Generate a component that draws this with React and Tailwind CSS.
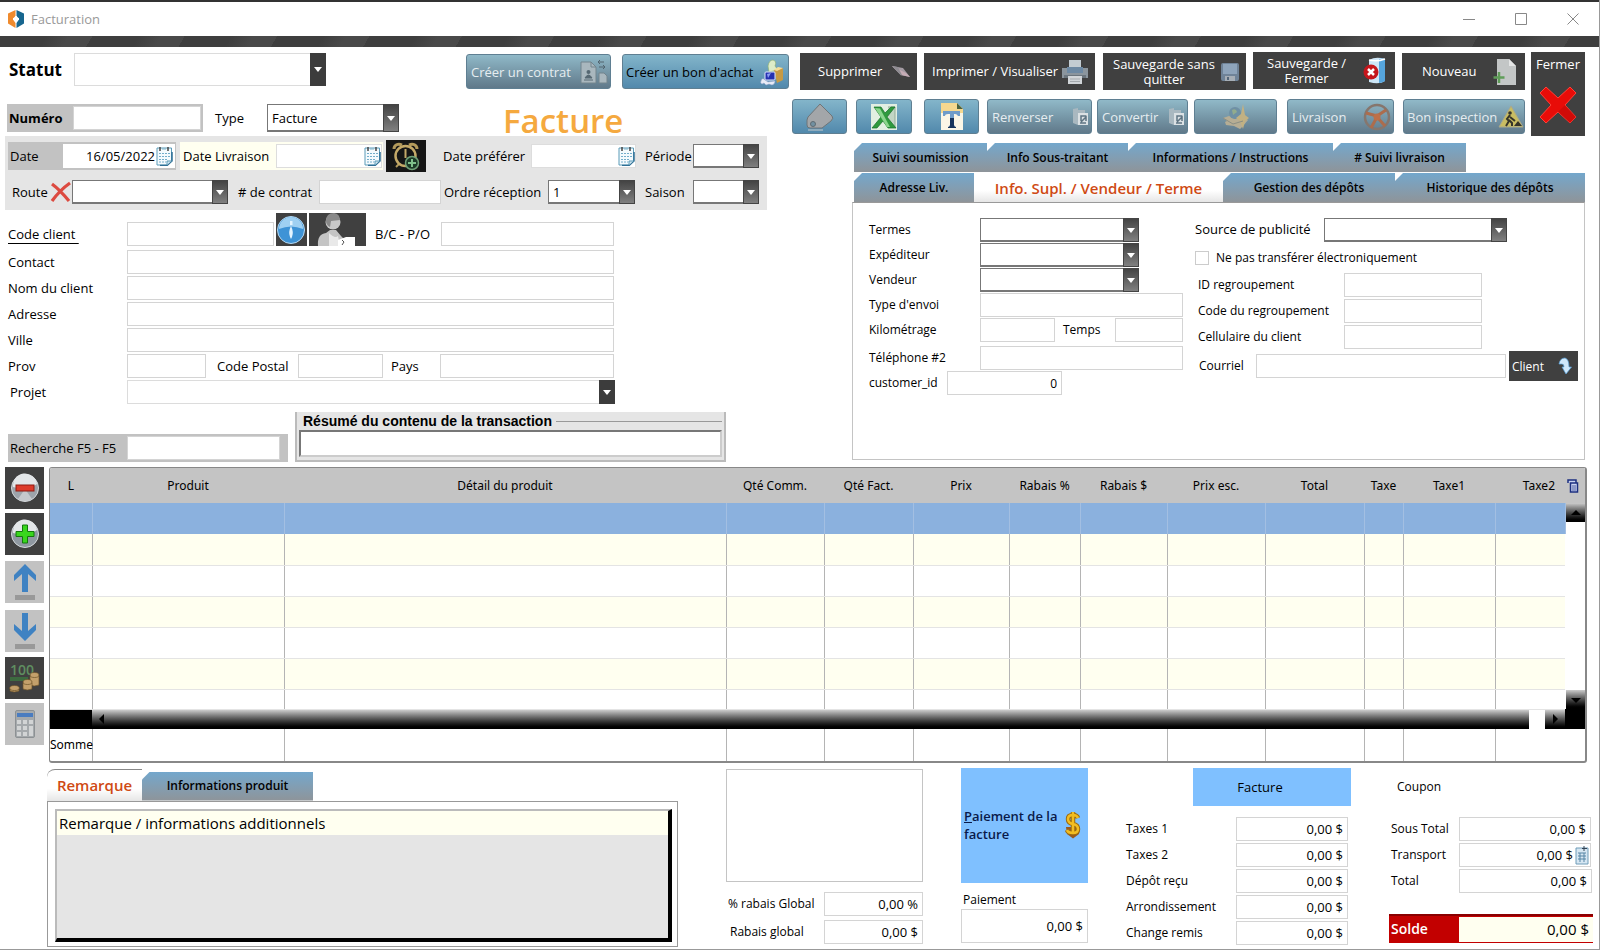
import { useId } from 'react'

const box = 'border border-[#d4d4d4] bg-white px-1 outline-none min-w-0'

function Input({ className = '', label, value = '', id }) {
    return (
        <input
            type="text"
            id={id}
            aria-label={label}
            defaultValue={value}
            className={`${box} h-6 ${className}`}
        />
    )
}

// label and text box side by side, tied together
function Field({ label, labelClass = '', inputClass = '', value }) {
    const id = useId()
    return (
        <>
            <label htmlFor={id} className={`shrink-0 whitespace-nowrap ${labelClass}`}>{label}</label>
            <Input id={id} value={value} className={inputClass} />
        </>
    )
}

function Select({ className = '', label, id, options = [''], flat = false }) {
    return (
        <div className={`relative shrink-0 ${className}`}>
            <select
                id={id}
                aria-label={label}
                className={`w-full h-full appearance-none bg-white pl-1 pr-5 outline-none border ${flat ? 'border-[#dcdcdc]' : 'border-[#777] border-b-2'}`}
            >
                {options.map((o) => <option key={o}>{o}</option>)}
            </select>
            <span
                className={`pointer-events-none absolute right-0 inset-y-0 w-4 flex items-center justify-center ${flat ? 'bg-[#3c3c3c]' : 'bg-linear-to-b from-[#444] to-[#808080] border border-[#444]'}`}
            >
                <svg viewBox="0 0 8 5" className="w-2 h-[5px]"><path d="M0 0h8L4 5z" fill="#fff" /></svg>
            </span>
        </div>
    )
}

function SelectField({ label, labelClass = '', selectClass = '', options, flat }) {
    const id = useId()
    return (
        <>
            <label htmlFor={id} className={`shrink-0 whitespace-nowrap ${labelClass}`}>{label}</label>
            <Select id={id} options={options} flat={flat} className={selectClass} />
        </>
    )
}

function DarkButton({ children, className = '' }) {
    return (
        <button type="button" className={`bg-[#404040] text-white flex items-center justify-between shrink-0 text-center leading-[15px] ${className}`}>
            {children}
        </button>
    )
}

function BlueButton({ children, className = '', muted = false, label }) {
    return (
        <button
            type="button"
            aria-label={label}
            className={`h-[35px] shrink-0 flex items-center rounded-[3px] border border-[#5f7f92] whitespace-nowrap font-medium ${muted ? 'text-[#e6edf0] bg-linear-to-b from-[#90b9c8] to-[#60798a]' : 'text-black bg-linear-to-b from-[#83b5ca] to-[#5289ac]'} ${className}`}
        >
            {children}
        </button>
    )
}

/* ---------- icons ---------- */

function CalendarIcon() {
    return (
        <svg viewBox="0 0 18 20" className="w-[18px] h-5 shrink-0">
            <path d="M2 2h14.500v12.500L12 19H2z" fill="#f4fafd" stroke="#5b9bb8" />
            <path d="M17 6v9l-5 4.500H5" fill="none" stroke="#2f6f95" strokeWidth="1.500" />
            <path d="M12 19v-4h4.500" fill="#cfe4ee" stroke="#5b9bb8" />
            <path d="M5 1v4M13 1v4" stroke="#444" strokeWidth="1.500" />
            <path d="M7 3h4" stroke="#7fb3ca" />
            <path d="M4 7.500h11M4 10.500h11M4 13.500h8M4 16h7" stroke="#74aecb" strokeDasharray="2 1" />
        </svg>
    )
}

function LogoIcon() {
    return (
        <svg viewBox="0 0 18 18" className="w-[18px] h-[18px]">
            <path d="M8.500 0 1 3.500v10L8.500 18v-5L6 9.500v-1L8.500 6z" fill="#ef8a2d" />
            <path d="m9.500 0 7.500 3.500v10L9.500 18v-5L12 9.500v-1L9.500 6z" fill="#17668f" />
            <path d="M9 6v6M6 9h6" stroke="#fff" strokeWidth="2" />
        </svg>
    )
}

function ClockIcon() {
    return (
        <svg viewBox="0 0 40 32" className="w-10 h-8">
            <path d="M8 9c0-4 4-6 8-4M31 9c0-4-4-6-8-4" fill="none" stroke="#b39a5c" strokeWidth="3" />
            <path d="M10 27l3-3" stroke="#b39a5c" strokeWidth="2" />
            <circle cx="19.500" cy="16" r="10" fill="none" stroke="#c4a968" strokeWidth="2.500" />
            <path d="M19.500 9v9" stroke="#c4a968" strokeWidth="2" />
            <circle cx="26" cy="23" r="6.500" fill="#1c3a28" stroke="#6fa077" strokeWidth="1.500" />
            <path d="M26 19v8M22 23h8" stroke="#7fc08b" strokeWidth="2" />
        </svg>
    )
}

function CrossIcon() {
    return (
        <svg viewBox="0 0 22 22" className="w-[22px] h-[22px] shrink-0">
            <path d="M2 3q8 6 17 17M20 2Q10 9 2 20" fill="none" stroke="#dc4a40" strokeWidth="3.200" />
        </svg>
    )
}

function ContractIcon() {
    return (
        <svg viewBox="0 0 28 26" className="w-7 h-[26px]">
            <path d="M1 3h10l5 5v16H1z" fill="#a9b7be" stroke="#73848d" />
            <path d="M11 3v5h5" fill="none" stroke="#73848d" />
            <circle cx="8.500" cy="13" r="2" fill="#566872" />
            <path d="M5 19q3.500-6 7 0zM4 21h9" fill="#566872" stroke="#566872" />
            <path d="M19 14h5l3 3v7h-8z" fill="#a9b7be" stroke="#73848d" />
            <path d="M24 3h-6l2-2m-2 2 2 2M19 8h6l-2-2m2 2-2 2" fill="none" stroke="#52646e" />
        </svg>
    )
}

function PurchaseIcon() {
    return (
        <svg viewBox="0 0 24 28" className="w-6 h-7">
            <path d="M8 8q1-6 5-6 4 1 2 6l3 4-9 2z" fill="#dcebc8" stroke="#8fae6a" strokeWidth=".6" />
            <path d="m14 12 9-2v12l-6 3z" fill="#c79a44" />
            <path d="m14 12 3 1 6-3-5-1z" fill="#f3dc98" />
            <rect x="5" y="14" width="10" height="8" rx="1" fill="#2430b0" stroke="#dfe4ff" />
            <path d="m7 16 4-1-3 5z" fill="#8d9cf2" />
            <path d="M1 23q1-4 4-1l3 2 7-1q0 3-3 4l-3-1-3 1-2-2-2 1q-2-1-1-3" fill="#e9ecf6" stroke="#98a6cf" strokeWidth=".5" />
        </svg>
    )
}

function EraserIcon() {
    return (
        <svg viewBox="0 0 20 14" className="w-5 h-3.5">
            <path d="m1 1 11 2 7 9-9-2z" fill="#a49ba3" />
            <path d="m1 1 9 9 9 2-4-4z" fill="#c6acb5" />
            <path d="m1 1 6 1 4 8-1 .500z" fill="#8f8c92" />
        </svg>
    )
}

function PrinterIcon() {
    return (
        <svg viewBox="0 0 28 26" className="w-7 h-[26px]">
            <path d="M8 1h12v9H8z" fill="#c3ccd2" />
            <path d="M1 9h5v4h16V9h5v10H1z" fill="#8b959d" />
            <path d="M6 8h16v6H6z" fill="#6d89a3" />
            <path d="M3 19h22v-3H3z" fill="#6b757d" />
            <path d="M7 17h14v8H7z" fill="#d1d5d8" />
            <path d="M9 20h10M9 22.500h10" stroke="#a4a9ad" />
        </svg>
    )
}

function DiskIcon() {
    return (
        <svg viewBox="0 0 20 20" className="w-5 h-5">
            <rect x="1" y="1" width="18" height="18" rx="2" fill="#6f8398" />
            <path d="M3 2h14v10H3z" fill="#8ea4bb" />
            <path d="M5 14h10v5H5z" fill="#a6aeb6" />
            <path d="M7 15h2v3H7z" fill="#55677a" />
        </svg>
    )
}

function DoorIcon() {
    return (
        <svg viewBox="0 0 24 30" className="w-6 h-[30px]">
            <path d="M6 4q7-4 16-1v22q-6 4-16 1z" fill="#cde6f7" />
            <path d="M16 3q4-1 6 0v22q-3 2-6 2z" fill="#56a5dc" />
            <path d="M6 4q8 2 16-1" fill="none" stroke="#fff" strokeWidth="1.500" />
            <circle cx="8" cy="16" r="7.500" fill="#c5161c" />
            <path d="m5 13 6 6m0-6-6 6" stroke="#fff" strokeWidth="2.500" />
        </svg>
    )
}

function NewDocIcon() {
    return (
        <svg viewBox="0 0 24 28" className="w-6 h-7">
            <path d="M4 1h12l7 7v19H4z" fill="#c3c6c6" />
            <path d="M16 1v7h7z" fill="#e4e5e5" />
            <path d="M6 14v11M.5 19.500h11" stroke="#5f9d58" strokeWidth="2.500" />
        </svg>
    )
}

function RedXIcon() {
    return (
        <svg viewBox="0 0 38 38" className="w-[38px] h-[38px]">
            <path d="m7 1 12 11L31 1l6 6-11 12 11 12-6 6-12-11L7 37l-6-6 11-12L1 7z" fill="#e80c08" stroke="#ff4038" strokeLinejoin="round" />
            <path d="m19 26 12 11 6-6-11-12z" fill="#b80a08" opacity=".5" />
        </svg>
    )
}

function TagIcon() {
    return (
        <svg viewBox="0 0 28 28" className="w-7 h-7">
            <path d="M2 14 14 1l12 12q2 2-1 5l-9 7H4q-3 0-3-3v-5z" fill="#a3a6a9" stroke="#6f7578" />
            <circle cx="7" cy="21" r="2.500" fill="#7191a2" stroke="#5f6b72" />
            <path d="M2 27h15" stroke="#c5cacc" />
        </svg>
    )
}

function ExcelIcon() {
    return (
        <svg viewBox="0 0 26 26" className="w-[26px] h-[26px]">
            <path d="M0 0h26v26H0z" fill="#e2efe2" />
            <path d="M17 3h7v20h-7" fill="#c3d6c5" stroke="#94ab97" />
            <path d="M3 3h7l4 6 6-6h4l-8 10 9 11h-8l-5-7-6 7H1l9-11z" fill="#2f9a3e" stroke="#17702a" strokeWidth=".7" />
            <path d="m4 4 5 .500L19 23h-3z" fill="#8bd68e" />
        </svg>
    )
}

function TextDocIcon() {
    return (
        <svg viewBox="0 0 22 27" className="w-[22px] h-[27px]">
            <path d="M0 0h16l6 6v21H0z" fill="#fbf6e6" />
            <path d="M0 0h16l6 6v4H0z" fill="#f5d88f" />
            <path d="M16 0v6h6z" fill="#4a6240" />
            <path d="M2 8h17v5h-2q-1-2-3-2h-1v11q0 2 2 2v1H7v-1q2 0 2-2V11H7q-3 0-3 2H2z" fill="#6f9cc9" />
            <path d="M9 15h4v7q0 2 2 2v1H7v-1q2 0 2-2z" fill="#17345c" />
        </svg>
    )
}

function ConvertIcon() {
    return (
        <svg viewBox="0 0 17 20" className="w-[17px] h-5">
            <path d="M1 2 6 1v17l-5-2zM6 3h7v15H6z" fill="#a9b8c0" />
            <path d="M6 6h10v12H6z" fill="#dbe1e4" />
            <path d="M9 14V9h5m-5 6 5-5v4M8 16h6" fill="none" stroke="#5f7482" strokeWidth="1.500" />
        </svg>
    )
}

function MapIcon() {
    return (
        <svg viewBox="0 0 28 26" className="w-7 h-[26px]">
            <path d="m1 14 6-2 6 3 7-4 6 5-5 6-3 3-6-3-8-1-1-3 2-1z" fill="#b6ad94" />
            <circle cx="13" cy="9" r="6" fill="#6f90a4" />
            <path d="M10 6q4-2 5 2l-4 3z" fill="#92ac8d" />
            <path d="m21 0 2 11 4 3-4 3-2 8-3-8-4-3 5-4z" fill="#c2b182" />
            <path d="m1 14 10 6 10-3" fill="none" stroke="#8b8f85" />
        </svg>
    )
}

function WheelIcon() {
    return (
        <svg viewBox="0 0 28 28" className="w-7 h-7">
            <circle cx="14" cy="14" r="12" fill="none" stroke="#86766d" strokeWidth="2.500" />
            <path d="m14 13-11-3m11 3 9-6M14 14 8 25m6-11 8 9" stroke="#ad6c4c" strokeWidth="3" />
            <circle cx="14" cy="14" r="3.500" fill="#bd7049" />
        </svg>
    )
}

function WorksIcon() {
    return (
        <svg viewBox="0 0 26 24" className="w-[26px] h-6">
            <path d="m13 1 12 21H1z" fill="#c9bd62" stroke="#a9a98c" />
            <circle cx="12" cy="8" r="1.800" fill="#35342a" />
            <path d="m12 10-3 4 2 2-3 5m3-6 3 3v3m-2-9 5 4" fill="none" stroke="#35342a" strokeWidth="2" />
            <path d="m16 21 4-5 4 5z" fill="#35342a" />
        </svg>
    )
}

function InfoIcon() {
    return (
        <svg viewBox="0 0 30 32" className="w-[30px] h-8">
            <circle cx="15" cy="16" r="13.500" fill="#3e93d6" stroke="#b6d9f2" />
            <path d="M3 15a12 12 0 0 1 24 0q-12-5-24 0" fill="#9fd0f2" />
            <path d="M15 12q3 6 1 11l-1 2-1-2q-2-5 1-11M14 7h2.500v4H14z" fill="#e4f4ff" />
        </svg>
    )
}

function PersonIcon() {
    return (
        <svg viewBox="0 0 57 33" className="w-[57px] h-[33px]">
            <path d="M9 33q-1-12 8-13l4-3h6l5 6 3 3v7z" fill="#c4c4c4" />
            <circle cx="24" cy="9" r="7.500" fill="#c9c9c9" />
            <path d="M17 8q0-8 8-8 6 1 6 7l-9 1-1 6q-4-2-4-6" fill="#898989" />
            <path d="M20 20q6 6 9 3l2 10H20z" fill="#e9e9e9" />
            <path d="M29 27l8-3h9v9H29z" fill="#fff" />
            <path d="M33 27l2 2-2 3" fill="none" stroke="#555" />
        </svg>
    )
}

function MinusBall() {
    return (
        <svg viewBox="0 0 30 30" className="w-[30px] h-[30px]">
            <circle cx="15" cy="15" r="13.500" fill="#9da4ab" stroke="#d5d9dc" />
            <path d="M3 14a12 12 0 0 1 24-3q-10 7-24 3" fill="#e3e6e8" />
            <path d="M15 16 8 26q7 4 14 0z" fill="#dfe2e4" opacity=".6" />
            <rect x="6" y="12" width="18" height="6" fill="#dd3b2b" stroke="#8e1a12" />
        </svg>
    )
}

function PlusBall() {
    return (
        <svg viewBox="0 0 30 30" className="w-[30px] h-[30px]">
            <circle cx="15" cy="15" r="13.500" fill="#8f98a1" stroke="#d5d9dc" />
            <path d="M3 14a12 12 0 0 1 24-3q-10 7-24 3" fill="#e3e6e8" />
            <path d="M12.500 6h5v6.500H24v5h-6.500V24h-5v-6.500H6v-5h6.500z" fill="#39d61d" stroke="#13780c" />
        </svg>
    )
}

function ArrowUpIcon() {
    return (
        <svg viewBox="0 0 24 38" className="w-6 h-[38px]">
            <path d="M12 1 23 12v6l-8-7v18H9V11l-8 7v-6z" fill="#3f82c2" />
            <path d="M2 32h20v5H2z" fill="#999" />
        </svg>
    )
}

function ArrowDownIcon() {
    return (
        <svg viewBox="0 0 24 38" className="w-6 h-[38px]">
            <path d="M12 29 23 18v-6l-8 7V1H9v18l-8-7v6z" fill="#3f82c2" />
            <path d="M2 32h20v5H2z" fill="#999" />
        </svg>
    )
}

function CoinsIcon() {
    return (
        <svg viewBox="0 0 32 36" className="w-8 h-9">
            <text x="1" y="15" fontSize="14" fontFamily="Open Sans, sans-serif" fontWeight="600" fill="#5f8f60">100</text>
            <path d="M1 17h18v4H1z" fill="#3d6a40" />
            <g fill="#c3a06b" stroke="#6b5128" strokeWidth=".7">
                <path d="M21 16v9q4 2 9 0v-9z" />
                <ellipse cx="25.500" cy="15" rx="4.500" ry="2.500" />
                <path d="M14 23v6q4 2 9 0v-6z" />
                <ellipse cx="18.500" cy="22" rx="4.500" ry="2.500" />
                <path d="M1 28v3q4 2 9 0v-3z" />
                <ellipse cx="5.500" cy="28" rx="4.800" ry="2.500" />
            </g>
        </svg>
    )
}

function CalcIcon() {
    return (
        <svg viewBox="0 0 20 28" className="w-5 h-7">
            <rect x=".5" y=".5" width="19" height="27" rx="1.500" fill="#a5a9ac" stroke="#8d9194" />
            <path d="M2 3h16v4H2z" fill="#4a7cc0" />
            <path d="M2 10h4v4H2zM8 10h4v4H8zM14 10h4v4h-4zM2 16h4v4H2zM8 16h4v4H8zM14 16h4v10h-4zM2 22h4v4H2zM8 22h4v4H8z" fill="#d2d4d5" />
        </svg>
    )
}

function DollarIcon() {
    return (
        <svg viewBox="0 0 18 28" className="w-[18px] h-7">
            <path d="M2 16h14l-1 7-6 4.500L3 23z" fill="#9a5a1c" />
            <path d="M14 7q-1-3-5-3-5 0-5 4t5 5 5 5-5 4-6-3M9 1v22" fill="none" stroke="#9b6b12" strokeWidth="4.500" />
            <path d="M14 7q-1-3-5-3-5 0-5 4t5 5 5 5-5 4-6-3M9 1v22" fill="none" stroke="#f2bd22" strokeWidth="2.500" />
        </svg>
    )
}

function CopyIcon() {
    return (
        <svg viewBox="0 0 12 14" className="w-3 h-3.5">
            <path d="M1 4V1h8v3M3.500 4h7v9h-7z" fill="#c8d2f0" stroke="#1c2f80" strokeWidth="1.500" />
            <path d="M5 7h4M5 9h4M5 11h4" stroke="#1c2f80" strokeWidth=".7" />
        </svg>
    )
}

function HookArrowIcon() {
    return (
        <svg viewBox="0 0 14 18" className="w-3.5 h-[18px]">
            <path d="M1 7q1-6 6-6 4 1 4 9h2.500L8 17 4 10h2q0-3-2-3z" fill="#cfe8fb" stroke="#5aa3dc" strokeWidth=".7" />
        </svg>
    )
}

/* ---------- tabs ---------- */

function Tab({ children, className = '' }) {
    return (
        <button
            type="button"
            role="tab"
            aria-selected="false"
            className={`h-[29px] whitespace-nowrap text-black bg-linear-to-b from-[#73a7cc] to-[#8e9499] [clip-path:polygon(8px_0,100%_0,100%_100%,0_100%,0_8px)] ${className}`}
        >
            {children}
        </button>
    )
}

function ActiveTab({ children, className = '' }) {
    return (
        <button
            type="button"
            role="tab"
            aria-selected="true"
            className={`whitespace-nowrap text-[#cf4a14] text-[15px] bg-linear-to-b from-white from-60% to-[#e6e6e6] ${className}`}
        >
            {children}
        </button>
    )
}

/* ---------- sections ---------- */

function TitleBar() {
    return (
        <>
            <header className="h-9 border-t-2 border-[#333] flex items-center pl-[7px] pr-[18px] text-[#999]">
                <LogoIcon />
                <h1 className="ml-1.5 text-[13px]">Facturation</h1>
                <div className="ml-auto flex items-center gap-9">
                    <button type="button" aria-label="Réduire" className="w-4 h-4">
                        <svg viewBox="0 0 16 16"><path d="M2 8.500h12" stroke="#888" /></svg>
                    </button>
                    <button type="button" aria-label="Agrandir" className="w-4 h-4">
                        <svg viewBox="0 0 16 16"><path d="M2.500 2.500h11v11h-11z" fill="none" stroke="#888" /></svg>
                    </button>
                    <button type="button" aria-label="Fermer la fenêtre" className="w-4 h-4">
                        <svg viewBox="0 0 16 16"><path d="m2.500 2.500 11 11m0-11-11 11" stroke="#888" /></svg>
                    </button>
                </div>
            </header>
            <div className="h-[11px] bg-[repeating-linear-gradient(120deg,#3e3e3e_0px,#3e3e3e_40px,#494949_60px,#494949_80px)]" />
        </>
    )
}

function LeftHeader() {
    return (
        <>
            <div className="flex items-start pl-[9px] pt-[6px]">
                <SelectField
                    label="Statut"
                    labelClass="w-[65px] leading-[33px] text-[17px] font-bold"
                    selectClass="w-[252px] h-[33px]"
                    flat
                />
                <BlueButton muted className="ml-[140px] mt-px w-[145px] justify-between pl-1 pr-0.5">
                    Créer un contrat
                    <ContractIcon />
                </BlueButton>
                <BlueButton className="ml-[11px] mt-px w-[167px] justify-between pl-[3px] pr-1">
                    Créer un bon d'achat
                    <PurchaseIcon />
                </BlueButton>
            </div>
            <div className="flex items-center pl-[7px] mt-3 h-[34px]">
                <div className="bg-[#c2c2c2] w-[196px] h-7 flex items-center pl-0.5">
                    <Field label="Numéro" labelClass="w-16 font-bold" inputClass="w-[128px]" />
                </div>
                <SelectField
                    label="Type"
                    labelClass="ml-3 w-[52px]"
                    selectClass="w-[132px] h-7"
                    options={['Facture']}
                />
                <h2 className="ml-[104px] pt-1.5 text-[33px] leading-[34px] font-semibold text-[#f5a93f]">Facture</h2>
            </div>
        </>
    )
}

function DatesPanel() {
    return (
        <section className="ml-[5px] mt-px w-[762px] h-[74px] bg-[#e5e5e5] pl-[3px] flex flex-col justify-center gap-1.5">
            <div className="flex items-center h-8">
                <div className="bg-[#c2c2c2] w-[168px] h-7 flex items-center pl-0.5">
                    <label htmlFor="date" className="w-[53px] font-medium">Date</label>
                    <div className="bg-white w-[112px] h-6 flex items-center">
                        <input id="date" type="text" defaultValue="16/05/2022" className="w-[92px] text-right outline-none" />
                        <CalendarIcon />
                    </div>
                </div>
                <div className="ml-1 bg-[#fffff0] w-[203px] h-7 flex items-center pl-[3px]">
                    <label htmlFor="livraison" className="w-[93px] font-medium whitespace-nowrap">Date Livraison</label>
                    <div className="bg-white border border-[#ddd] w-[106px] h-6 flex items-center">
                        <input id="livraison" type="text" className="w-[86px] outline-none" />
                        <CalendarIcon />
                    </div>
                </div>
                <button type="button" aria-label="Rappel" className="ml-[3px] bg-[#161616] w-10 h-8">
                    <ClockIcon />
                </button>
                <label htmlFor="preferer" className="ml-[17px] w-[88px] whitespace-nowrap">Date préférer</label>
                <div className="bg-white border border-[#ddd] w-[105px] h-6 flex items-center">
                    <input id="preferer" type="text" className="w-[85px] outline-none" />
                    <CalendarIcon />
                </div>
                <SelectField label="Période" labelClass="ml-[9px] w-12" selectClass="w-[66px] h-6" />
            </div>
            <div className="flex items-center h-7 pl-1">
                <label htmlFor="route" className="w-[38px]">Route</label>
                <CrossIcon />
                <Select id="route" className="w-[156px] h-6" />
                <Field label="# de contrat" labelClass="ml-2.5 w-[81px]" inputClass="w-[122px]" />
                <SelectField
                    label="Ordre réception"
                    labelClass="ml-[3px] w-[104px]"
                    selectClass="w-[87px] h-6"
                    options={['1']}
                />
                <SelectField label="Saison" labelClass="ml-2.5 w-12" selectClass="w-[66px] h-6" />
            </div>
        </section>
    )
}

function ClientForm() {
    return (
        <section className="pl-2 mt-[3px] w-[616px] flex flex-col">
            <div className="flex items-end h-[33px]">
                <label htmlFor="code" className="w-[119px] h-6 leading-6 underline underline-offset-4">Code client&nbsp;</label>
                <Input id="code" className="w-[147px]" />
                <button type="button" aria-label="Information" className="ml-0.5 bg-[#404040] w-[31px] h-[33px]"><InfoIcon /></button>
                <button type="button" aria-label="Fiche client" className="ml-0.5 bg-[#404040] w-[57px] h-[33px]"><PersonIcon /></button>
                <Field label="B/C - P/O" labelClass="ml-[9px] w-[66px] leading-6" inputClass="w-[173px]" />
            </div>
            <div className="flex flex-col gap-0.5 pt-1">
                {['Contact', 'Nom du client', 'Adresse', 'Ville'].map((label) => (
                    <div key={label} className="flex items-center">
                        <Field label={label} labelClass="w-[119px]" inputClass="w-[487px]" />
                    </div>
                ))}
                <div className="flex items-center">
                    <Field label="Prov" labelClass="w-[119px]" inputClass="w-[79px]" />
                    <Field label="Code Postal" labelClass="ml-[11px] w-[81px]" inputClass="w-[85px]" />
                    <Field label="Pays" labelClass="ml-2 w-[49px]" inputClass="w-[174px]" />
                </div>
                <div className="flex items-center">
                    <SelectField label="Projet" labelClass="pl-0.5 w-[119px]" selectClass="w-[488px] h-6" flat />
                </div>
            </div>
        </section>
    )
}

function SearchRow() {
    return (
        <div className="flex items-end pl-2 mt-2">
            <div className="bg-[#c2c2c2] w-[280px] h-7 flex items-center pl-0.5">
                <Field label="Recherche F5 - F5" labelClass="w-[117px]" inputClass="w-[153px]" />
            </div>
            <div className="ml-[7px] w-[431px] h-[50px] bg-[#e5e5e5] border-2 border-t-0 border-[#bbb] px-0.5">
                <div className="flex items-center gap-1">
                    <label htmlFor="resume" className="font-['Liberation_Sans',sans-serif] font-bold text-sm leading-[18px] pl-1">
                        Résumé du contenu de la transaction
                    </label>
                    <span className="grow h-px bg-[#999]" />
                </div>
                <input id="resume" type="text" className="w-full h-[27px] bg-white border-2 border-[#ccc] border-t-[#777] border-l-[#777] px-1 outline-none" />
            </div>
        </div>
    )
}

function Toolbar() {
    return (
        <div className="flex justify-between pt-[5px] pr-3.5">
            <div className="flex flex-col gap-[9px]">
                <div className="flex pl-2 gap-[7px] font-medium">
                    <DarkButton className="w-[117px] h-[37px] pl-[18px] pr-1.5 mt-px">Supprimer <EraserIcon /></DarkButton>
                    <DarkButton className="w-[171px] h-[37px] pl-2 pr-1.5 mt-px whitespace-nowrap">Imprimer / Visualiser <PrinterIcon /></DarkButton>
                    <DarkButton className="ml-px w-[143px] h-[37px] pl-2.5 pr-1.5 mt-px"><span>Sauvegarde sans<br />quitter</span> <DiskIcon /></DarkButton>
                    <DarkButton className="w-[142px] h-[37px] pl-3.5 pr-2"><span>Sauvegarde /<br />Fermer</span> <DoorIcon /></DarkButton>
                    <DarkButton className="w-[123px] h-[37px] pl-5 pr-2 mt-px">Nouveau <NewDocIcon /></DarkButton>
                </div>
                <div className="flex">
                    <BlueButton label="Étiquette" className="w-[55px] justify-center"><TagIcon /></BlueButton>
                    <BlueButton label="Excel" className="ml-[9px] w-14 justify-center"><ExcelIcon /></BlueButton>
                    <BlueButton label="Texte" className="ml-3 w-[55px] justify-center"><TextDocIcon /></BlueButton>
                    <BlueButton muted className="ml-2 w-[105px] justify-between pl-1 pr-0.5">Renverser <ConvertIcon /></BlueButton>
                    <BlueButton muted className="ml-[5px] w-[91px] justify-between pl-1 pr-0.5">Convertir <ConvertIcon /></BlueButton>
                    <BlueButton muted label="Carte" className="ml-[6px] w-[83px] justify-center"><MapIcon /></BlueButton>
                    <BlueButton muted className="ml-[10px] w-[107px] justify-between pl-1 pr-0.5">Livraison <WheelIcon /></BlueButton>
                    <BlueButton muted className="ml-[9px] w-[122px] justify-between pl-[3px]">Bon inspection <WorksIcon /></BlueButton>
                </div>
            </div>
            <DarkButton className="w-[54px] h-[84px] flex-col pt-[5px] pb-3">Fermer <RedXIcon /></DarkButton>
        </div>
    )
}

function SupplementPanel() {
    const mailId = useId()
    return (
        <section className="ml-[60px] mr-3.5 mt-[7px]">
            <div role="tablist" className="pl-0.5 text-xs font-semibold">
                <div className="flex w-[612px]">
                    <Tab className="w-[133px]">Suivi soumission</Tab>
                    <Tab className="w-[141px]">Info Sous-traitant</Tab>
                    <Tab className="w-[205px]">Informations / Instructions</Tab>
                    <Tab className="w-[133px]"># Suivi livraison</Tab>
                </div>
                <div className="flex mt-px">
                    <Tab className="w-[120px]">Adresse Liv.</Tab>
                    <ActiveTab className="w-[249px]">Info. Supl. / Vendeur / Terme</ActiveTab>
                    <Tab className="w-[172px]">Gestion des dépôts</Tab>
                    <Tab className="grow">Historique des dépôts</Tab>
                </div>
            </div>
            <div className="border border-[#c4c4c4] border-t-[#999] h-[258px] pl-4 pr-1.5 pt-[15px] flex gap-3 text-xs">
                <div className="w-[314px] shrink-0 flex flex-col gap-px">
                    {['Termes', 'Expéditeur', 'Vendeur'].map((label) => (
                        <div key={label} className="flex items-center">
                            <SelectField label={label} labelClass="w-[111px]" selectClass="w-[159px] h-6" />
                        </div>
                    ))}
                    <div className="flex items-center">
                        <Field label="Type d'envoi" labelClass="w-[111px]" inputClass="w-[203px]" />
                    </div>
                    <div className="flex items-center">
                        <Field label="Kilométrage" labelClass="w-[111px]" inputClass="w-[75px]" />
                        <Field label="Temps" labelClass="ml-2 w-[52px]" inputClass="w-[68px]" />
                    </div>
                    <div className="flex items-center mt-[3px]">
                        <Field label="Téléphone #2" labelClass="w-[111px]" inputClass="w-[203px]" />
                    </div>
                    <div className="flex items-center">
                        <Field label="customer_id" labelClass="w-[78px]" inputClass="w-[115px] text-right" value="0" />
                    </div>
                </div>
                <div className="grow flex flex-col">
                    <div className="flex items-center">
                        <SelectField label="Source de publicité" labelClass="w-[129px] text-[13px]" selectClass="w-[183px] h-6" />
                    </div>
                    <div className="flex items-center gap-[7px] h-[31px]">
                        <input id="transfert" type="checkbox" className="appearance-none w-3.5 h-3.5 border border-[#ccc] bg-white" />
                        <label htmlFor="transfert">Ne pas transférer électroniquement</label>
                    </div>
                    <div className="flex flex-col gap-0.5 pl-[3px]">
                        {['ID regroupement', 'Code du regroupement', 'Cellulaire du client'].map((label) => (
                            <div key={label} className="flex items-center">
                                <Field label={label} labelClass="w-[146px]" inputClass="w-[138px]" />
                            </div>
                        ))}
                    </div>
                    <div className="flex items-center h-[30px] mt-0.5 pl-1">
                        <label htmlFor={mailId} className="w-[57px]">Courriel</label>
                        <Input id={mailId} className="grow" />
                        <DarkButton className="ml-[3px] w-[69px] h-[30px] pl-[3px] pr-1.5">Client <HookArrowIcon /></DarkButton>
                    </div>
                </div>
            </div>
        </section>
    )
}

const columns = [
    ['L', 'w-[42px]'],
    ['Produit', 'w-[192px]'],
    ['Détail du produit', ''],
    ['Qté Comm.', 'w-[98px]'],
    ['Qté Fact.', 'w-[89px]'],
    ['Prix', 'w-[96px]'],
    ['Rabais %', 'w-[71px]'],
    ['Rabais $', 'w-[87px]'],
    ['Prix esc.', 'w-[98px]'],
    ['Total', 'w-[99px]'],
    ['Taxe', 'w-[39px]'],
    ['Taxe1', 'w-[92px]'],
    ['Taxe2', 'w-[70px]'],
]

const rowStyles = [
    'h-[31px] bg-[#8bb1de]',
    'h-[31px] bg-[#fffff0]',
    'h-[31px] bg-white',
    'h-[31px] bg-[#fffff0]',
    'h-[31px] bg-white',
    'h-[31px] bg-[#fffff0]',
    'h-5 bg-white',
]

function ScrollArrow({ d, label, className = '' }) {
    return (
        <button type="button" aria-label={label} className={`w-5 h-[19px] flex items-center justify-center bg-linear-to-b from-[#ccc] to-black ${className}`}>
            <svg viewBox="0 0 10 10" className="w-2.5 h-2.5"><path d={d} fill="#000" /></svg>
        </button>
    )
}

function ProductTable() {
    return (
        <div className="grow border border-[#888] border-b-2 border-r-2 rounded-[3px] overflow-hidden">
            <table className="w-full table-fixed border-collapse text-xs font-['Noto_Sans',sans-serif]">
                <colgroup>
                    {columns.map(([name, width]) => <col key={name} className={width} />)}
                    <col className="w-5" />
                </colgroup>
                <thead>
                    <tr className="h-[35px] bg-[#c4c4c4]">
                        {columns.slice(0, 12).map(([name]) => (
                            <th key={name} className="font-normal p-0 whitespace-nowrap">{name}</th>
                        ))}
                        <th colSpan={2} className="font-normal p-0">
                            <div className="flex items-center justify-end gap-3 pr-1.5">
                                Taxe2
                                <CopyIcon />
                            </div>
                        </th>
                    </tr>
                </thead>
                <tbody>
                    {rowStyles.map((style, i) => (
                        <tr key={i} className={style}>
                            {columns.map(([name]) => (
                                <td
                                    key={name}
                                    className={`p-0 border-r last:border-r-0 ${i === 0 ? 'border-r-[#a3bfe2]' : 'border-r-[#b4b4b4] border-b border-b-[#e4e4e4]'}`}
                                />
                            ))}
                            {i === 0 && (
                                <td rowSpan={7} className="p-0 bg-white h-px">
                                    <div className="h-[206px] flex flex-col justify-between">
                                        <ScrollArrow label="Monter" d="M0 7h10L5 2z" />
                                        <ScrollArrow label="Descendre" d="M0 3h10L5 8z" />
                                    </div>
                                </td>
                            )}
                        </tr>
                    ))}
                    <tr className="h-[19px]">
                        <td className="p-0 bg-black" />
                        <td colSpan={12} className="p-0">
                            <div className="flex">
                                <ScrollArrow label="Gauche" d="M7 0v10L2 5z" />
                                <div className="grow h-[19px] bg-linear-to-b from-[#ccc] to-black" />
                                <ScrollArrow label="Droite" d="M3 0v10l5-5z" className="ml-4" />
                            </div>
                        </td>
                        <td className="p-0 bg-black" />
                    </tr>
                    <tr className="h-8">
                        <td className="p-0 border-r border-[#b4b4b4]">Somme</td>
                        {columns.slice(1, 12).map(([name]) => (
                            <td key={name} className="p-0 border-r border-[#b4b4b4]" />
                        ))}
                        <td colSpan={2} className="p-0" />
                    </tr>
                </tbody>
            </table>
        </div>
    )
}

function SideButtons() {
    const base = 'w-[39px] h-[42px] flex items-center justify-center'
    return (
        <div className="w-[39px] shrink-0 flex flex-col gap-1">
            <button type="button" aria-label="Retirer la ligne" className={`${base} bg-[#404040]`}><MinusBall /></button>
            <button type="button" aria-label="Ajouter une ligne" className={`${base} bg-[#404040]`}><PlusBall /></button>
            <button type="button" aria-label="Monter la ligne" className={`${base} bg-[#c2c2c2] mt-0.5`}><ArrowUpIcon /></button>
            <button type="button" aria-label="Descendre la ligne" className={`${base} bg-[#c2c2c2] mt-[3px]`}><ArrowDownIcon /></button>
            <button type="button" aria-label="Monnaie" className={`${base} bg-[#404040] mt-px`}><CoinsIcon /></button>
            <button type="button" aria-label="Calculatrice" className={`${base} bg-[#c2c2c2]`}><CalcIcon /></button>
        </div>
    )
}

function Remarks() {
    return (
        <section className="w-[631px] shrink-0 pt-1.5">
            <div role="tablist" className="flex items-end text-xs font-semibold">
                <ActiveTab className="w-[95px] h-8 border-t border-[#888] rounded-tl-lg">Remarque</ActiveTab>
                <Tab className="w-[171px]">Informations produit</Tab>
            </div>
            <div className="border border-[#999] h-[146px] p-[7px] pr-[5px] pb-1">
                <div className="h-full flex flex-col border-2 border-[#bbb] border-r-4 border-r-black border-b-4 border-b-black bg-[#e5e5e5]">
                    <label htmlFor="remarque" className="bg-[#fffff0] h-6 leading-6 pl-0.5 text-[15px] font-medium">
                        Remarque / informations additionnels
                    </label>
                    <textarea id="remarque" className="grow resize-none bg-transparent px-1 outline-none" />
                </div>
            </div>
        </section>
    )
}

const taxes = ['Taxes 1', 'Taxes 2', 'Dépôt reçu', 'Arrondissement', 'Change remis']

function Totals() {
    return (
        <>
            <section className="ml-2.5 w-[197px] shrink-0 flex flex-col gap-1 pt-1.5">
                <textarea aria-label="Notes" className="border border-[#c4c4c4] h-[113px] resize-none outline-none" />
                <div className="flex items-center justify-between mt-1.5">
                    <Field label="% rabais Global" labelClass="pl-0.5 text-xs" inputClass="w-[99px] text-right" value="0,00 %" />
                </div>
                <div className="flex items-center justify-between">
                    <Field label="Rabais global" labelClass="pl-1 text-xs" inputClass="w-[99px] text-right" value="0,00 $" />
                </div>
            </section>
            <section className="w-[127px] shrink-0 flex flex-col pt-[5px]">
                <button type="button" className="h-[115px] bg-[#7fc0ff] flex items-center justify-between pl-[3px] pr-1.5 font-semibold text-left leading-[18px] text-[#0a1a4a]">
                    <span><u>P</u>aiement de la<br />facture</span>
                    <DollarIcon />
                </button>
                <label htmlFor="paiement" className="mt-[7px] leading-[19px] pl-0.5 text-xs">Paiement</label>
                <input id="paiement" type="text" defaultValue="0,00 $" className={`${box} h-[34px] text-right`} />
            </section>
            <section className="w-[225px] shrink-0 flex flex-col pt-[5px]">
                <button type="button" className="self-end h-[38px] w-[158px] bg-[#7fc0ff] font-medium pr-6">Facture</button>
                <div className="flex flex-col gap-0.5 mt-[11px]">
                    {taxes.map((label) => (
                        <div key={label} className="flex items-center pr-[3px]">
                            <Field label={label} labelClass="w-[110px] text-xs" inputClass="w-[112px] text-right" value="0,00 $" />
                        </div>
                    ))}
                </div>
            </section>
            <section className="w-[204px] shrink-0 flex flex-col pt-[5px]">
                <button type="button" className="h-[38px] w-[158px] text-left pl-2 text-xs">Coupon</button>
                <div className="flex flex-col gap-0.5 mt-[11px]">
                    <div className="flex items-center pl-0.5">
                        <Field label="Sous Total" labelClass="w-[68px] text-xs" inputClass="w-[132px] text-right" value="0,00 $" />
                    </div>
                    <div className="flex items-center pl-0.5">
                        <label htmlFor="transport" className="w-[68px] text-xs">Transport</label>
                        <div className="w-[132px] h-6 border border-[#d4d4d4] flex items-center">
                            <input id="transport" type="text" defaultValue="0,00 $" className="w-[113px] text-right outline-none" />
                            <button type="button" aria-label="Calculer le transport" className="ml-0.5">
                                <svg viewBox="0 0 14 20" className="w-3.5 h-5">
                                    <path d="M1 3h12v16H1z" fill="#d5e6f2" stroke="#6f9cb8" />
                                    <path d="M3 8h8M3 11h8M3 14h8M5 8v9M9 8v9" stroke="#5685a5" />
                                    <path d="M9 1v5M7 3.500h5" stroke="#345" />
                                </svg>
                            </button>
                        </div>
                    </div>
                    <div className="flex items-center pl-0.5">
                        <Field label="Total" labelClass="w-[68px] text-xs" inputClass="w-[133px] text-right" value="0,00 $" />
                    </div>
                </div>
                <div className="mt-[21px] h-[29px] flex items-center bg-[#c20000] border-t-2 border-[#8a0000] pl-0.5 text-[15px] font-medium">
                    <label htmlFor="solde" className="w-[68px] text-white text-sm font-semibold">Solde</label>
                    <input id="solde" type="text" defaultValue="0,00 $" className="w-[134px] h-[25px] bg-[#fffff0] px-1 text-right outline-none" />
                </div>
            </section>
        </>
    )
}

export default function App() {
    return (
        <div className="min-h-screen bg-white text-black text-[13px] leading-4 font-['Open_Sans',sans-serif] border-r border-b border-[#999] overflow-hidden">
            <TitleBar />
            <div className="flex">
                <div className="w-[792px] shrink-0">
                    <LeftHeader />
                    <DatesPanel />
                    <ClientForm />
                    <SearchRow />
                </div>
                <div className="grow">
                    <Toolbar />
                    <SupplementPanel />
                </div>
            </div>
            <main className="flex gap-[5px] pl-[5px] pr-3 mt-[5px]">
                <SideButtons />
                <ProductTable />
            </main>
            <footer className="flex justify-between pl-[47px] pr-1.5">
                <Remarks />
                <Totals />
            </footer>
        </div>
    )
}
